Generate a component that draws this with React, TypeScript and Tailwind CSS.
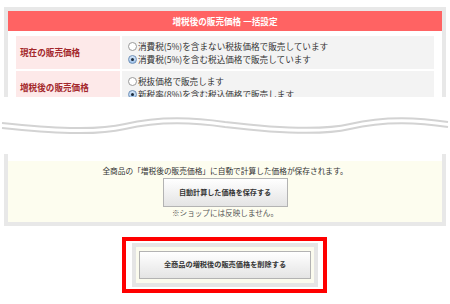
import React from "react";

const jp = { fontFamily: '"Noto Sans CJK JP", "Noto Sans", sans-serif' };

function Radio({ checked }: { checked?: boolean }) {
  return (
    <span
      className={`inline-flex shrink-0 w-[9px] h-[9px] rounded-full border items-center justify-center ${
        checked
          ? "border-[#6d8fb8] bg-gradient-to-b from-[#d5e6f7] to-[#9fc3ea]"
          : "border-[#9a9a9a] bg-white"
      }`}
    >
      {checked && <span className="w-[3px] h-[3px] rounded-full bg-[#1b2a3c]" />}
    </span>
  );
}

function Option({ checked, children }: { checked?: boolean; children: React.ReactNode }) {
  return (
    <div className="flex items-center gap-[1px] h-[13px]">
      <Radio checked={checked} />
      <span className="text-[8.6px] text-[#333] leading-none whitespace-nowrap">{children}</span>
    </div>
  );
}

function Row({ label, options }: { label: string; options: [string, boolean][] }) {
  return (
    <div className="flex gap-[2px] h-[33px] shrink-0">
      <div className="w-[104px] bg-[#fde9e9] flex items-center pl-[4px]">
        <span className="text-[8.6px] font-bold text-[#a3272b] leading-none">{label}</span>
      </div>
      <div className="flex-1 bg-[#f3f3f3] flex flex-col justify-center pl-[6px]">
        {options.map(([text, checked]) => (
          <Option key={text} checked={checked}>
            {text}
          </Option>
        ))}
      </div>
    </div>
  );
}

function Wave() {
  const seg = (y: number) =>
    `M2 ${y} C 50 ${y + 5}, 95 ${y + 8}, 125 ${y + 1} C 150 ${y - 5}, 185 ${y - 7}, 225 ${y - 1} ` +
    `C 275 ${y + 5}, 320 ${y + 8}, 350 ${y + 1} C 375 ${y - 5}, 410 ${y - 7}, 448 ${y - 1}`;
  return (
    <svg width="450" height="57" viewBox="0 0 450 57" className="block">
      <path d={seg(26)} fill="none" stroke="#d3d3d3" strokeWidth="2" />
      <path d={seg(31)} fill="none" stroke="#d3d3d3" strokeWidth="2" />
    </svg>
  );
}

function GrayButton({ children, className }: { children: React.ReactNode; className: string }) {
  return (
    <button
      className={`${className} border border-[#b3b3b3] bg-gradient-to-b from-white to-[#e4e4e4] text-[#333] font-bold leading-none flex items-center justify-center`}
    >
      {children}
    </button>
  );
}

export default function App() {
  return (
    <div className="w-[450px] h-[304px] bg-white overflow-hidden" style={jp}>
      <div className="pt-[7px] px-[4px]">
        <div className="h-[90px] overflow-hidden border-x-4 border-t-4 border-[#e8e8e8]">
          <div className="h-[20px] bg-[#ff6363] flex items-center justify-center">
            <span className="text-[8.6px] font-bold text-white leading-none">増税後の販売価格 一括設定</span>
          </div>
          <div className="px-[8px] pt-[5px] flex flex-col gap-[2px]">
            <Row
              label="現在の販売価格"
              options={[
                ["消費税(5%)を含まない税抜価格で販売しています", false],
                ["消費税(5%)を含む税込価格で販売しています", true],
              ]}
            />
            <Row
              label="増税後の販売価格"
              options={[
                ["税抜価格で販売します", false],
                ["新税率(8%)を含む税込価格で販売します", true],
              ]}
            />
          </div>
        </div>
      </div>

      <Wave />

      <div className="px-[4px]">
        <div className="border-x-4 border-b-4 border-[#e8e8e8] pt-[7px]">
          <div className="h-[61px] bg-[#fdfdef] flex flex-col items-center pt-[5px]">
            <span className="text-[7.7px] text-[#333] leading-[10px]">
              全商品の「増税後の販売価格」に自動で計算した価格が保存されます。
            </span>
            <GrayButton className="mt-[2px] w-[125px] h-[29px] text-[7.1px]">自動計算した価格を保存する</GrayButton>
            <span className="mt-[1px] text-[7.6px] text-[#555] leading-[10px]">※ショップには反映しません。</span>
          </div>
        </div>
      </div>

      <div className="flex justify-center mt-[11px]">
        <div className="ml-[-1px] w-[205px] h-[56px] border-4 border-[#ff0000] pl-[6px] pr-[5px] py-[2px]">
          <div className="h-full border-4 border-[#e5e5e5] bg-[#fbfbee] px-[3px] py-[4px]">
            <GrayButton className="w-full h-full text-[7.2px]">全商品の増税後の販売価格を削除する</GrayButton>
          </div>
        </div>
      </div>
    </div>
  );
}
